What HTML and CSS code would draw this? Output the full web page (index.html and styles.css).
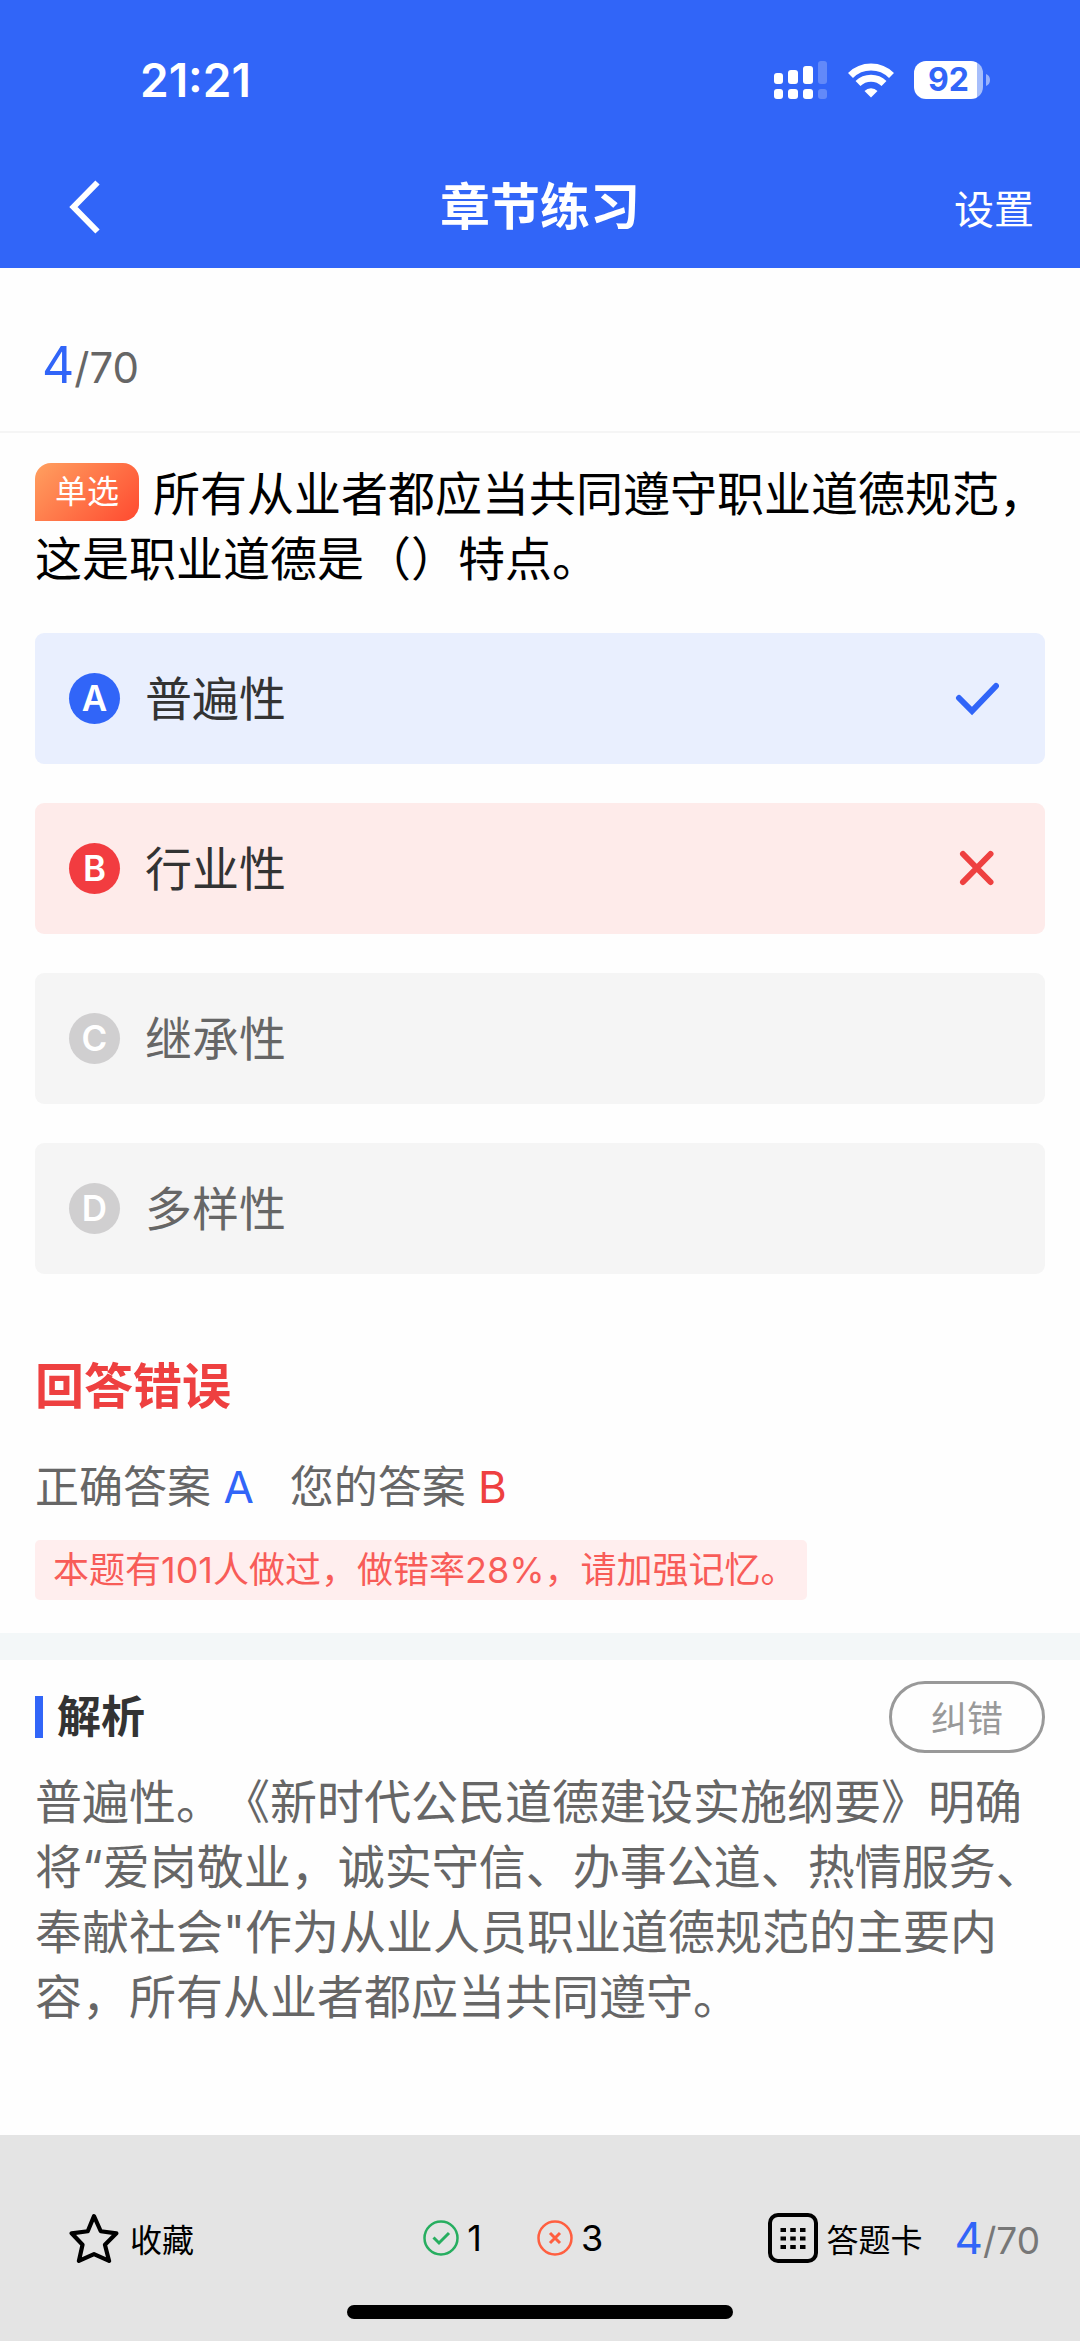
FILE: index.html
```html
<!DOCTYPE html>
<html lang="zh-CN">
  <head>
    <meta charset="UTF-8" />
    <meta name="viewport" content="width=device-width, initial-scale=1.0" />
    <link rel="stylesheet" href="styles.css">
    <title>章节练习</title>
  </head>
  <body>
    <header>
      <div class="status">
        <span class="time">21:21</span>
        <div class="status-icons">
          <svg class="signal" viewBox="0 0 54 38">
            <g fill="#fff">
              <rect x="0" y="12" width="9" height="11" rx="3" />
              <rect x="14" y="9" width="10" height="14" rx="3" />
              <rect x="29" y="5" width="10" height="18" rx="3" />
              <rect x="0" y="28" width="9" height="10" rx="3" />
              <rect x="14" y="28" width="10" height="10" rx="3" />
              <rect x="29" y="28" width="10" height="10" rx="3" />
            </g>
            <g fill="#fff" fill-opacity="0.24">
              <rect x="44" y="0" width="9" height="23" rx="3" />
              <rect x="44" y="28" width="9" height="10" rx="3" />
            </g>
          </svg>
          <svg class="wifi" viewBox="0 0 46 35">
            <g fill="none" stroke="#fff" stroke-width="7">
              <path d="M2.500 12.500a29 29 0 0 1 41 0" />
              <path d="M10 20.500a18.500 18.500 0 0 1 26 0" />
            </g>
            <path d="M23 34.500l-6.500-6.500a9 9 0 0 1 13 0z" fill="#fff" />
          </svg>
          <div class="battery">
            <span class="level">92</span>
            <svg class="cap" viewBox="0 0 4 12"><path d="M0 0a6.500 6.500 0 0 1 0 12z" fill="#fff" fill-opacity="0.5" /></svg>
          </div>
        </div>
      </div>
      <nav>
        <button class="back" aria-label="返回">
          <svg viewBox="0 0 32 54"><path d="M28.500 2.500L4.500 27l24 24.500" fill="none" stroke="#fff" stroke-width="6" /></svg>
        </button>
        <h1>章节练习</h1>
        <button class="setting">设置</button>
      </nav>
    </header>

    <div class="progress"><span class="current">4</span>/70</div>

    <main>
      <p class="question"><span class="tag">单选</span>所有从业者都应当共同遵守职业道德规范，这是职业道德是（）特点。</p>

      <div class="options">
        <button class="option right">
          <span class="letter">A</span>
          <span class="text">普遍性</span>
          <svg class="mark" viewBox="0 0 44 44"><path d="M4 21l13 13L41 9" /></svg>
        </button>
        <button class="option wrong">
          <span class="letter">B</span>
          <span class="text">行业性</span>
          <svg class="mark" viewBox="0 0 44 44"><path d="M8 7l27.500 28M35.500 7L8 35" /></svg>
        </button>
        <button class="option">
          <span class="letter">C</span>
          <span class="text">继承性</span>
        </button>
        <button class="option">
          <span class="letter">D</span>
          <span class="text">多样性</span>
        </button>
      </div>

      <section class="result">
        <h2>回答错误</h2>
        <div class="answers">
          <span>正确答案 <span class="blue">A</span></span>
          <span>您的答案 <span class="red">B</span></span>
        </div>
        <p class="tip">本题有101人做过，做错率28%，请加强记忆。</p>
      </section>
    </main>

    <section class="analysis">
      <div class="analysis-top">
        <h3>解析</h3>
        <button class="report">纠错</button>
      </div>
      <p>普遍性。《新时代公民道德建设实施纲要》明确将“爱岗敬业，诚实守信、办事公道、热情服务、奉献社会"作为从业人员职业道德规范的主要内容，所有从业者都应当共同遵守。</p>
    </section>

    <footer>
      <div class="toolbar">
        <button class="collect">
          <svg class="icon" viewBox="0 0 48 48"><path d="M24 3l6.500 14.500L45.500 19.500 34.500 30.500 38.500 46 24 39.500 9.500 46 13 30.500 2.500 19.500 18 17.500z" fill="none" stroke="#000" stroke-width="4" stroke-linejoin="round" /></svg>
          收藏
        </button>
        <div class="counts">
          <span class="count">
            <svg viewBox="0 0 36 36" fill="none" stroke="#27ae60"><circle cx="18" cy="18" r="16.500" stroke-width="2.500" /><path d="M10.500 17.500l5.500 5.500 10-10" stroke-width="3" /></svg>
            1
          </span>
          <span class="count">
            <svg viewBox="0 0 36 36" fill="none" stroke="#ff5f40"><circle cx="18" cy="18" r="16.500" stroke-width="2.500" /><path d="M13 13l10 10M23 13L13 23" stroke-width="3" /></svg>
            3
          </span>
        </div>
        <div class="tools">
          <button class="card">
            <svg class="icon" viewBox="0 0 50 50">
              <rect x="2" y="2" width="46" height="46" rx="8" fill="none" stroke="#000" stroke-width="4" />
              <path d="M12.500 17h25M12.500 25.500h25M12.500 34h25" stroke="#000" stroke-width="4" stroke-dasharray="5.500 4.250" />
            </svg>
            答题卡
          </button>
          <div class="page"><span class="current">4</span>/70</div>
        </div>
      </div>
      <div class="home-bar"></div>
    </footer>
  </body>
</html>
```

FILE: styles.css
```css
* {
  box-sizing: border-box;
  margin: 0;
  padding: 0;
}

body {
  min-height: 100vh;
  display: flex;
  flex-direction: column;
  background: #fefefe;
  font-family: Inter, "Noto Sans CJK SC", sans-serif;
  text-spacing-trim: space-all;
}

button {
  border: none;
  background: none;
  font-family: inherit;
  color: inherit;
  cursor: pointer;
}

svg {
  display: block;
  flex: none;
}

header {
  background: #3165f8;
  color: #fff;
  height: 268px;
}

/* status bar */
.status {
  display: flex;
  justify-content: space-between;
  align-items: center;
  height: 160px;
  padding: 0 90px 0 140px;
}

.time {
  font-size: 46px;
  font-weight: 600;
}

.status-icons {
  display: flex;
  align-items: center;
  gap: 20px;
}

.signal {
  width: 54px;
  height: 38px;
}

.wifi {
  width: 46px;
  height: 35px;
}

.battery {
  display: flex;
  align-items: center;
  gap: 3px;
}

.level {
  width: 69px;
  height: 38px;
  line-height: 38px;
  border-radius: 12px;
  background: linear-gradient(to right, #fff 63px, #a6befb 63px);
  color: #3165f8;
  font-size: 32px;
  font-weight: 700;
  text-align: center;
}

.cap {
  width: 4px;
  height: 12px;
}

/* title bar */
nav {
  display: grid;
  grid-template-columns: 1fr auto 1fr;
  align-items: center;
  height: 94px;
  padding: 0 46px;
}

.back {
  justify-self: start;
  padding: 0 23px;
}

.back svg {
  width: 32px;
  height: 54px;
}

h1 {
  font-size: 50px;
  font-weight: 600;
  line-height: 72px;
}

.setting {
  justify-self: end;
  font-size: 40px;
}

.progress {
  height: 165px;
  padding: 67px 42px 0;
  border-bottom: 2px solid #f5f5f5;
  color: #666;
  font-size: 42px;
  line-height: 60px;
}

.current {
  color: #3165f8;
  font-size: 50px;
}

main {
  padding: 28px 35px 33px;
  border-bottom: 27px solid #f3f7f8;
}

.question {
  margin-right: -8px;
  font-size: 47px;
  line-height: 65px;
  color: #000;
}

.tag {
  display: inline-block;
  height: 58px;
  margin: 2px 14px 0 0;
  padding: 0 20px;
  border-radius: 16px 16px 16px 0;
  background: linear-gradient(135deg, #ffa060, #ff4a30);
  color: #fff;
  font-size: 32px;
  line-height: 58px;
  vertical-align: top;
}

.options {
  display: flex;
  flex-direction: column;
  gap: 39px;
  margin-top: 42px;
}

.option {
  display: flex;
  align-items: center;
  gap: 25px;
  height: 131px;
  padding: 0 46px 0 34px;
  border-radius: 9px;
  background: #f5f5f5;
  color: #666;
  font-size: 47px;
}

.letter {
  width: 51px;
  height: 51px;
  border-radius: 50%;
  background: #d0cfd0;
  color: #fff;
  font-size: 35px;
  font-weight: 600;
  line-height: 51px;
}

.text {
  padding-bottom: 7px;
}

.right,
.wrong {
  color: #333;
}

.right {
  background: #e9effe;
}

.wrong {
  background: #feebea;
}

.right .letter {
  background: #3165f8;
}

.wrong .letter {
  background: #f23c40;
}

.mark {
  width: 44px;
  height: 44px;
  margin-left: auto;
  fill: none;
  stroke: #3165f8;
  stroke-width: 6;
  stroke-linecap: round;
}

.wrong .mark {
  stroke: #ee4040;
}

.result {
  padding-top: 77px;
}

h2 {
  color: #ee4040;
  font-size: 49px;
  font-weight: 700;
  line-height: 72px;
}

.answers {
  display: flex;
  gap: 36px;
  margin-top: 32px;
  color: #666;
  font-size: 44px;
  line-height: 64px;
}

.blue {
  color: #3165f8;
}

.red {
  color: #ee4040;
}

.tip {
  width: fit-content;
  margin-top: 21px;
  padding: 0 10px 0 18px;
  border-radius: 5px;
  background: #ffeeee;
  color: #f85c58;
  font-size: 36px;
  line-height: 60px;
}

/* explanation */
.analysis {
  padding: 21px 35px;
}

.analysis-top {
  display: flex;
  justify-content: space-between;
  align-items: center;
}

h3 {
  padding-left: 14px;
  border-left: 8px solid #3165f8;
  color: #333;
  font-size: 44px;
  line-height: 42px;
}

.report {
  width: 156px;
  height: 72px;
  padding-bottom: 3px;
  border: 3px solid #999;
  border-radius: 36px;
  color: #999;
  font-size: 36px;
}

.analysis p {
  margin: 16px -8px 0 0;
  color: #666;
  font-size: 47px;
  line-height: 65px;
}

/* bottom bar */
footer {
  height: 206px;
  margin-top: auto;
  padding-top: 70px;
  background: #e4e4e4;
}

.toolbar {
  display: flex;
  justify-content: space-between;
  align-items: center;
  height: 66px;
  padding: 0 40px 0 69px;
}

.collect,
.card,
.count {
  display: flex;
  align-items: center;
  gap: 8px;
  color: #000;
  font-size: 32px;
}

.icon {
  width: 50px;
  height: 50px;
}

.collect {
  gap: 11px;
}

.counts {
  display: flex;
  gap: 55px;
  margin-left: 64px;
}

.count {
  font-size: 36px;
}

.count svg {
  width: 36px;
  height: 36px;
}

.tools {
  display: flex;
  align-items: center;
  gap: 32px;
}

.page {
  color: #777;
  font-size: 37px;
}

.page .current {
  font-size: 44px;
}

.home-bar {
  width: 386px;
  height: 14px;
  margin: 34px auto 0;
  border-radius: 7px;
  background: #000;
}
```
